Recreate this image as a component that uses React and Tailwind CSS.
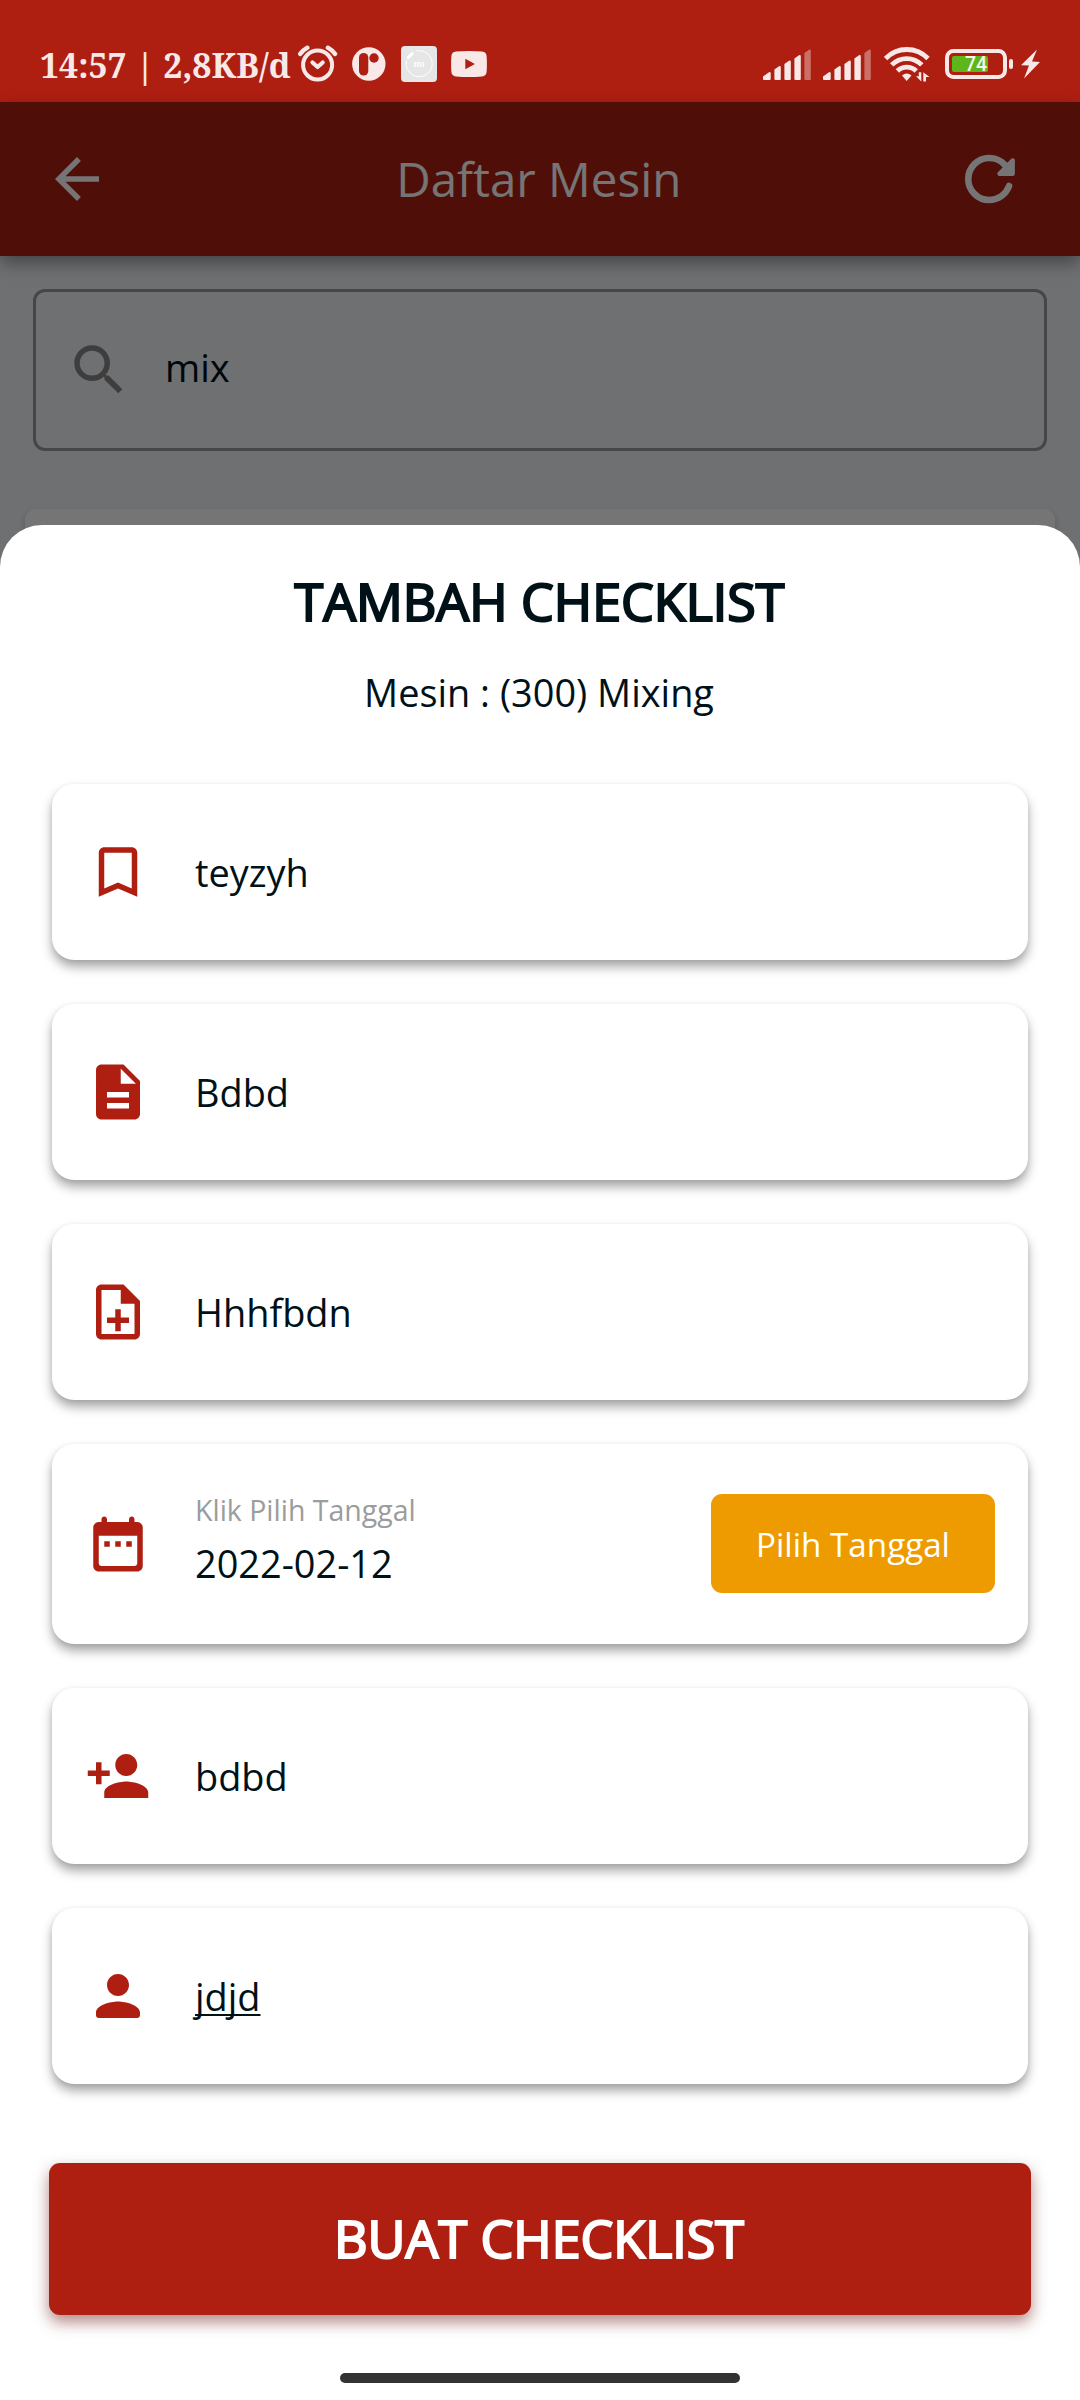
import React from "react";
import {
  MdArrowBack,
  MdSearch,
  MdBookmarkBorder,
  MdDescription,
  MdOutlineNoteAdd,
  MdPersonAdd,
} from "react-icons/md";

const TINT = "#f8e9e8";

function AlarmIcon({ className }) {
  return (
    <svg className={className} width="40" height="38" viewBox="0 0 40 38" fill="none" stroke={TINT} strokeLinecap="round">
      <circle cx="19.6" cy="20" r="14.5" strokeWidth="4" />
      <path d="M14.500 17.500l5.100 4.500 5.100-4.500" strokeWidth="4.200" strokeLinejoin="round" />
      <path d="M2.200 8.900Q5 5.200 9.300 2.700M37 8.900Q34.200 5.200 29.900 2.700" strokeWidth="4.400" />
    </svg>
  );
}

function PicsArtIcon({ className }) {
  return (
    <svg className={className} width="34" height="34" viewBox="0 0 34 34">
      <circle cx="16.800" cy="17" r="16.700" fill={TINT} />
      <rect x="7" y="6" width="9.300" height="22.600" rx="4.600" fill="#ae1f12" />
      <circle cx="22" cy="11" r="4.700" fill="#ae1f12" />
    </svg>
  );
}

function MiIcon({ className }) {
  return (
    <svg className={className} width="36" height="36" viewBox="0 0 36 36">
      <rect width="36" height="36" rx="4" fill="#e6e6e6" />
      <path d="M5.700 14.200A13 13 0 1 0 15.200 5" fill="none" stroke="#fff" strokeWidth="0.900" />
      <path d="M7.300 11.500l4-4" stroke="#fff" strokeWidth="3" strokeLinecap="round" />
      <text x="18" y="21" textAnchor="middle" fontFamily="Roboto, sans-serif" fontSize="9" fontWeight="700" fill="#fff">
        mı
      </text>
    </svg>
  );
}

function YoutubeIcon({ className }) {
  return (
    <svg className={className} width="36" height="26" viewBox="0 0 36 26">
      <path
        d="M5 .6Q18-.4 31 .6Q35.300 1 35.600 5Q36.200 13 35.600 21Q35.300 25 31 25.400Q18 26.400 5 25.400Q.7 25 .4 21Q-.2 13 .4 5Q.7 1 5 .6Z"
        fill={TINT}
      />
      <path d="M14.300 7.700v10.600l9.600-5.300z" fill="#ae1f12" />
    </svg>
  );
}

function SignalIcon({ className }) {
  return (
    <svg className={className} width="48" height="31" viewBox="0 0 48 31" fill={TINT}>
      <path d="M0 27.500L6 23.200Q7.700 22.800 7.700 24.500V30Q7.700 31 6.700 31H1Q0 31 0 30Z" />
      <path d="M11.400 20.500L16 17.200Q17.800 16.600 17.800 18.500V30Q17.800 31 16.800 31H12.400Q11.400 31 11.400 30Z" />
      <path d="M21.400 15L26 11.700Q27.800 11.100 27.800 13V30Q27.800 31 26.800 31H22.400Q21.400 31 21.400 30Z" />
      <path d="M31.400 9.500L36 6.200Q37.800 5.600 37.800 7.500V30Q37.800 31 36.800 31H32.400Q31.400 31 31.400 30Z" />
      <path d="M41.400 4L46 .7Q47.800 .1 47.800 2V30Q47.800 31 46.800 31H42.400Q41.400 31 41.400 30Z" opacity="0.4" />
    </svg>
  );
}

function WifiIcon({ className }) {
  return (
    <svg className={className} width="46" height="36" viewBox="0 0 46 36" fill="none" stroke={TINT} strokeWidth="4.800">
      <path d="M1.600 12.500A29.500 29.500 0 0 1 44 12.500" />
      <path d="M7.700 18.900A21 21 0 0 1 37.800 18.900" />
      <path d="M13.400 25A13.300 13.300 0 0 1 32.200 25" />
      <path d="M18 29.600Q22.700 25.500 27.500 29.600L22.700 35Z" fill={TINT} stroke="none" />
      <path d="M37.300 26.300V35.500L32 30.200H34.800V26.300ZM39.300 35.500V26.300L45.500 31H42V35.500Z" fill={TINT} stroke="none" />
    </svg>
  );
}

function BatteryIcon({ className }) {
  return (
    <svg className={className} width="69" height="30" viewBox="0 0 69 30">
      <rect x="2" y="2" width="58" height="26" rx="6.500" fill="none" stroke={TINT} strokeWidth="4" />
      <rect x="7" y="7" width="36" height="16" rx="2" fill="#5fb61a" />
      <rect x="64" y="10" width="4" height="10" rx="2" fill={TINT} />
      <text x="31" y="21.700" textAnchor="middle" fontFamily="Roboto, sans-serif" fontSize="19.500" fontWeight="500" fill="#f6f6f0">
        74
      </text>
    </svg>
  );
}

function BoltIcon({ className }) {
  return (
    <svg className={className} width="19" height="30" viewBox="0 0 19 30">
      <path d="M16 .5L0 16.200L8 16.600L3 29.500L19 13L11 12.600Z" fill={TINT} />
    </svg>
  );
}

function ReloadIcon({ className }) {
  return (
    <svg className={className} width="56" height="56" viewBox="0 0 512 512" fill="none">
      <path
        d="M400 148l-21.120-24.570A191.430 191.430 0 00240 64C134 64 48 150 48 256s86 192 192 192a192.090 192.090 0 00181.070-128"
        stroke="#fff"
        strokeWidth="60"
        strokeLinecap="round"
      />
      <path
        d="M474 84V208a20 20 0 01-20 20H332c-16 0-25-20-13-33L439 73C451 62 474 66 474 84z"
        fill="#fff"
      />
    </svg>
  );
}

function CalendarIcon() {
  return (
    <svg width="66" height="66" viewBox="0 0 24 24" fill="currentColor">
      <path
        fillRule="evenodd"
        d="M19 4h-1V3c0-.55-.45-1-1-1s-1 .45-1 1v1H8V3c0-.55-.45-1-1-1s-1 .45-1 1v1H5c-1.110 0-2 .9-2 2v14c0 1.100.89 2 2 2h14c1.100 0 2-.9 2-2V6c0-1.100-.9-2-2-2zM5 9h14v10c0 .55-.45 1-1 1H6c-.55 0-1-.45-1-1z"
      />
      <path d="M7 11h2v2H7zM11 11h2v2h-2zM15 11h2v2h-2z" />
    </svg>
  );
}

function PersonIcon() {
  return (
    <svg width="66" height="66" viewBox="0 0 24 24" fill="currentColor">
      <path d="M12 12c2.210 0 4-1.790 4-4s-1.790-4-4-4-4 1.790-4 4 1.790 4 4 4zm0 2c-2.670 0-8 1.340-8 4v1c0 .55.450 1 1 1h14c.55 0 1-.45 1-1v-1c0-2.660-5.330-4-8-4z" />
    </svg>
  );
}

function StatusBar() {
  return (
    <div className="flex h-[102px] items-center bg-[#ae1f12] pt-[26px] pl-[40px]">
      <span className="mt-[2px] w-[252px] whitespace-pre font-['Noto_Serif',serif] text-[33.800px] leading-[46px] font-bold text-[#f8e9e8]">
        14:57 | 2,8KB/d
      </span>
      <AlarmIcon className="ml-[6px]" />
      <PicsArtIcon className="ml-[14.200px]" />
      <MiIcon className="ml-[14.500px]" />
      <YoutubeIcon className="ml-[14px]" />
      <div className="ml-auto flex items-center pr-[40px]">
        <SignalIcon />
        <SignalIcon className="ml-[12px]" />
        <WifiIcon className="ml-[13px]" />
        <BatteryIcon className="ml-[15px]" />
        <BoltIcon className="ml-[7px]" />
      </div>
    </div>
  );
}

function Card({ icon, children, className = "h-[176px]" }) {
  return (
    <div
      className={`${className} flex items-center rounded-[22px] bg-white px-[33px] shadow-[0_7px_11px_rgba(0,0,0,0.34),0_1px_5px_rgba(0,0,0,0.07)]`}
    >
      <span className="shrink-0 text-[#ae1f12]">{icon}</span>
      <div className="ml-[44px] flex flex-1 items-center justify-between">{children}</div>
    </div>
  );
}

function FieldText({ children, className = "" }) {
  return <span className={`text-[37.900px] leading-[52px] whitespace-pre ${className}`}>{children}</span>;
}

export default function App() {
  return (
    <div className="relative flex h-[2400px] w-[1080px] flex-col overflow-hidden bg-[#f0f3f6] font-['Open_Sans',sans-serif] text-[#001118]">
      <StatusBar />

      <main className="relative flex-1">
        <header className="flex h-[154px] items-center justify-between bg-[#ae1f12] pr-[60.500px] pl-[44px] text-white shadow-[0_7px_16px_rgba(0,0,0,0.38)]">
          <MdArrowBack size={66} />
          <h1 className="pl-[4px] text-[47.500px] leading-[66px] font-normal">Daftar Mesin</h1>
          <ReloadIcon />
        </header>

        <div className="mx-[33px] mt-[33px] flex h-[162px] items-center rounded-[12px] border-3 border-[#979b9b] pl-[30px]">
          <MdSearch size={66} className="text-[#878787]" />
          <span className="mb-[6px] ml-[33px] text-[38px] leading-[52px]">mix</span>
        </div>

        <div className="mx-[25px] mt-[58px] h-[200px] rounded-[11px] bg-white shadow-[0_3px_6px_rgba(0,0,0,0.2)]" />

        <div className="absolute inset-0 bg-black/54" />

        <section className="absolute inset-x-0 top-[423px] bottom-0 flex flex-col rounded-t-[42px] bg-white">
          <h2 className="mt-[40px] pr-[1px] text-center text-[52px] leading-[71px] font-normal [-webkit-text-stroke:2.200px_#001118]">
            TAMBAH CHECKLIST
          </h2>
          <p className="mt-[30px] pr-[2px] text-center text-[37.900px] leading-[52px]">Mesin : (300) Mixing</p>

          <div className="mx-[52px] mt-[66px] flex flex-col gap-[44px]">
            <Card icon={<MdBookmarkBorder size={66} />}>
              <FieldText>teyzyh</FieldText>
            </Card>
            <Card icon={<MdDescription size={66} />}>
              <FieldText>Bdbd</FieldText>
            </Card>
            <Card icon={<MdOutlineNoteAdd size={66} />}>
              <FieldText>Hhhfbdn</FieldText>
            </Card>
            <Card icon={<CalendarIcon />} className="h-[200px]">
              <div className="mb-[9px] flex flex-col gap-[6px]">
                <span className="text-[28.500px] leading-[41px] text-[#9c9c9c]">Klik Pilih Tanggal</span>
                <FieldText>2022-02-12</FieldText>
              </div>
              <button className="mb-[1px] h-[99px] w-[284px] rounded-[11px] bg-[#ee9b01] pt-[2px] text-[33.200px] leading-[45px] text-white">
                Pilih Tanggal
              </button>
            </Card>
            <Card icon={<MdPersonAdd size={66} />}>
              <FieldText>bdbd</FieldText>
            </Card>
            <Card icon={<PersonIcon />}>
              <FieldText className="underline decoration-2 underline-offset-[3px] [text-decoration-skip-ink:none]">
                jdjd
              </FieldText>
            </Card>
          </div>

          <button className="mx-[49px] mt-[79px] h-[152px] rounded-[11px] bg-[#ae1f12] pr-[2px] pb-[3px] text-[52px] leading-[71px] text-white shadow-[0_7px_15px_rgba(100,15,10,0.5)] [-webkit-text-stroke:2.200px_#fff]">
            BUAT CHECKLIST
          </button>

          <div className="mx-auto mt-[58px] h-[10px] w-[400px] rounded-full bg-[#333333]" />
        </section>
      </main>
    </div>
  );
}
